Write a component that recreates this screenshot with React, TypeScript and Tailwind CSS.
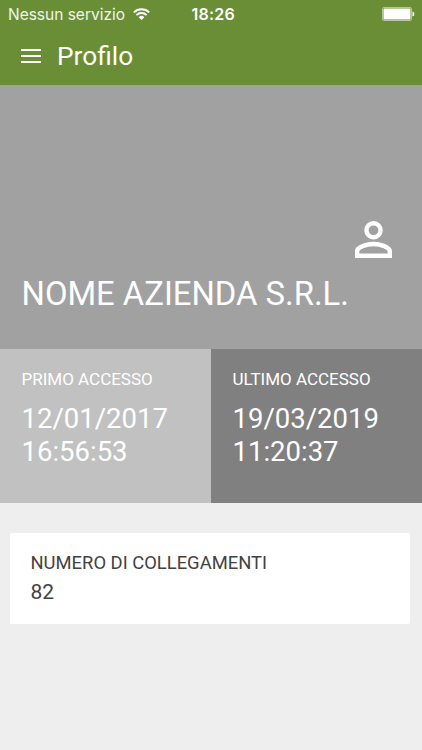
import React from 'react';

const StatusBar: React.FC = () => (
  <div className="relative flex h-7 items-center justify-between pl-2 pr-[7px] font-['Inter',sans-serif] text-base leading-7">
    <div className="flex items-center gap-2">
      <span className="w-[117px] whitespace-nowrap pt-px text-[15.5px] tracking-[-0.01px] text-white/90">Nessun servizio</span>
      <svg width="17" height="12" viewBox="0 0 17 12" fill="none" className="-mt-px">
        <path d="M.8 4.400a10.900 10.900 0 0 1 15.400 0M3.400 7.100a7.200 7.200 0 0 1 10.200 0" stroke="currentColor" strokeWidth="2" />
        <path d="m8.500 12-2.800-2.800a4 4 0 0 1 5.600 0Z" fill="currentColor" />
      </svg>
    </div>
    <span className="absolute left-[191.500px] font-semibold tracking-[0.2px]">18:26</span>
    <svg width="33" height="14" viewBox="0 0 33 14" fill="none">
      <rect x="0.5" y="0.5" width="29" height="13" rx="1.5" stroke="currentColor" strokeOpacity="0.5" />
      <rect x="1.500" y="1.500" width="27" height="11" rx="1" fill="currentColor" />
      <path d="M30.500 4.700h.5c1.800.4 1.800 4.200 0 4.600h-.5Z" fill="currentColor" />
    </svg>
  </div>
);

interface AccessPanelProps {
  label: string;
  date: string;
  time: string;
  className: string;
}

const AccessPanel: React.FC<AccessPanelProps> = ({ label, date, time, className }) => (
  <section className={`flex-1 px-[21.500px] pt-[19.500px] ${className}`}>
    <h2 className="text-[17px] leading-[22px]">{label}</h2>
    <p className="mt-[11.500px] text-[27.500px] leading-[33px]">
      {date}
      <br />
      {time}
    </p>
  </section>
);

const App: React.FC = () => (
  <div className="flex h-[750px] w-[422px] flex-col overflow-hidden bg-[#eeeeee] font-['Roboto',sans-serif] text-white">
    <header className="h-[84.500px] bg-[#698e36]">
      <StatusBar />
      <div className="flex h-14 items-center gap-4 pl-[21px]">
        <svg width="20" height="14" viewBox="0 0 20 14" fill="currentColor">
          <path d="M0 0h20v2H0zM0 6h20v2H0zM0 12h20v2H0z" />
        </svg>
        <h1 className="text-[26.300px] leading-8">Profilo</h1>
      </div>
    </header>

    <section className="flex h-[264px] flex-col justify-end bg-[#a1a1a1] px-[21.500px] pb-[34.500px]">
      <svg className="mr-[9px] self-end" width="37" height="37" viewBox="4 4 16 16" fill="currentColor">
        <path d="M12 5.900a2.100 2.100 0 1 1 0 4.200 2.100 2.100 0 0 1 0-4.200m0 9c2.970 0 6.100 1.460 6.100 2.100v1.100H5.900V17c0-.64 3.130-2.100 6.100-2.100M12 4a4 4 0 1 0 0 8 4 4 0 0 0 0-8m0 9c-2.670 0-8 1.340-8 4v3h16v-3c0-2.660-5.330-4-8-4" />
      </svg>
      <p className="mt-4 whitespace-nowrap text-[32.800px] leading-10">NOME AZIENDA S.R.L.</p>
    </section>

    <div className="flex h-[154.500px]">
      <AccessPanel label="PRIMO ACCESSO" date="12/01/2017" time="16:56:53" className="bg-[#c1c1c1]" />
      <AccessPanel label="ULTIMO ACCESSO" date="19/03/2019" time="11:20:37" className="bg-[#808080]" />
    </div>

    <section className="ml-[9.500px] mr-3 mt-[30.300px] h-[91px] rounded-xs bg-white px-[21px] pt-[15.700px] text-[#424242]">
      <h2 className="text-[18.400px] leading-7">NUMERO DI COLLEGAMENTI</h2>
      <p className="text-[21px] leading-[30px]">82</p>
    </section>
  </div>
);

export default App;
